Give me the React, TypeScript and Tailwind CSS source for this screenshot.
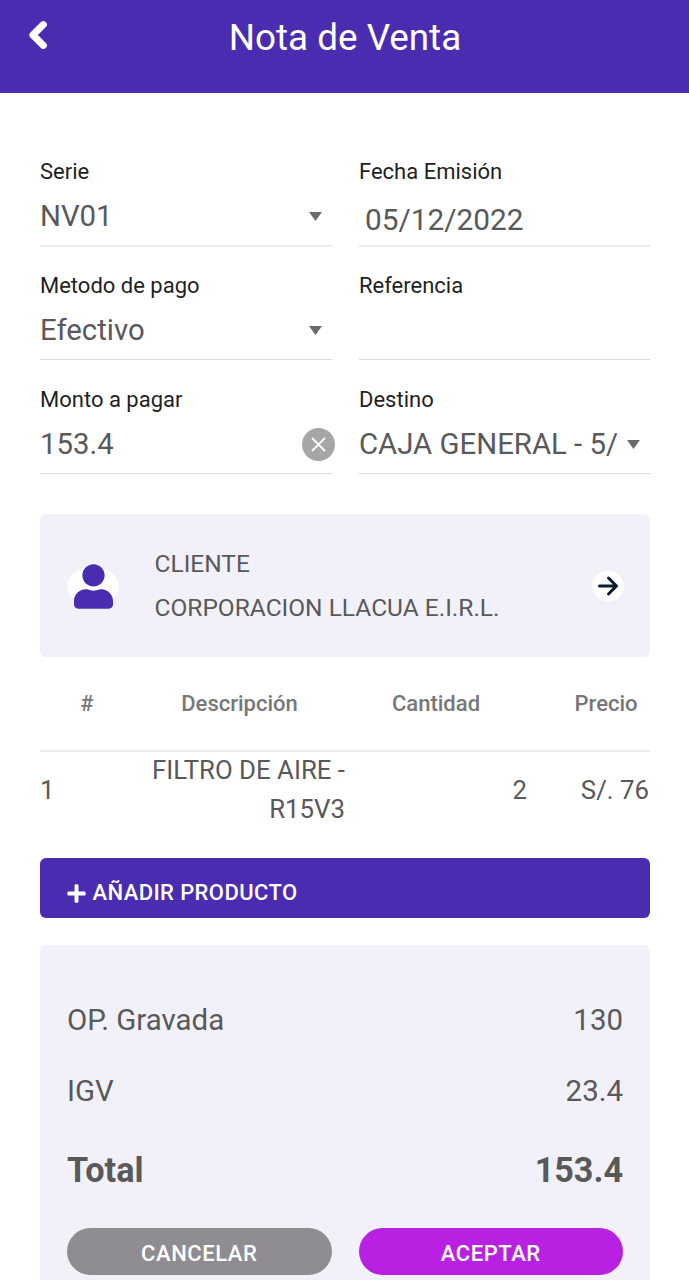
import type { ReactNode } from "react";
import { FaPlus, FaUser } from "react-icons/fa";

const font = { fontFamily: "Roboto, sans-serif" };

function Caret() {
  return (
    <svg className="h-[9px] w-[13px] shrink-0" viewBox="0 0 13 9">
      <path d="M0 0h13L6.5 9z" fill="#6b6b6b" />
    </svg>
  );
}

function Field({ label, first, children }: { label: string; first?: boolean; children?: ReactNode }) {
  return (
    <div className="flex h-[114px] flex-col">
      <div className="pt-[14px] text-[22px] leading-[26px] text-[#1f1f1f]">{label}</div>
      <div
        className={
          first
            ? "flex h-[62px] items-center border-b-2 border-[#ececec] pt-[2px] text-[29.35px] text-[#595959]"
            : "flex h-[61px] items-center border-b border-[#dcdcdc] pt-[2px] text-[29.35px] text-[#595959]"
        }
      >
        {children}
      </div>
    </div>
  );
}

export default function App() {
  return (
    <div style={font} className="h-[1280px] w-[689px] overflow-hidden bg-white text-[#595959]">
      <header className="flex h-[93px] items-center bg-[#4a2cb0] pb-[18px] text-white">
        <svg className="-mt-[5px] ml-[28px] h-[30px] w-[20px] shrink-0" viewBox="0 0 20 30" fill="none">
          <path d="M15.4 4.6L4.9 15l10.5 10.4" stroke="white" strokeWidth="7" strokeLinejoin="round" strokeLinecap="round" />
        </svg>
        <h1 className="mr-[47px] flex-1 text-center text-[36.8px]">Nota de Venta</h1>
      </header>
      <main className="pt-[52px] pr-[39px] pl-10">
        <div className="grid grid-cols-[292px_291px] gap-x-[27px]">
          <Field label="Serie" first>
            <span className="flex-1">NV01</span>
            <span className="pr-[10.5px]"><Caret /></span>
          </Field>
          <Field label="Fecha Emisión" first>
            <span className="pt-[8px] pl-[6px] text-[29.8px]">05/12/2022</span>
          </Field>
          <Field label="Metodo de pago">
            <span className="flex-1">Efectivo</span>
            <span className="pr-[10.5px]"><Caret /></span>
          </Field>
          <Field label="Referencia" />
          <Field label="Monto a pagar">
            <span className="flex-1">153.4</span>
            <svg className="mt-px -mr-[3px] size-[33px]" viewBox="0 0 33 33">
              <circle cx="16.5" cy="16.5" r="16.5" fill="#a6a6a6" />
              <path d="M10 10l13 13M23 10l-13 13" stroke="white" strokeWidth="1.8" />
            </svg>
          </Field>
          <Field label="Destino">
            <span className="w-[258px] overflow-hidden whitespace-nowrap">CAJA GENERAL - 5/</span>
            <span className="ml-[9.5px]"><Caret /></span>
          </Field>
        </div>
        <section className="mt-[27px] flex h-[143px] items-center rounded-[6px] bg-[#f2f1f9] px-[27px] text-[24.5px]">
          <div className="flex h-[38px] w-[52px] items-center justify-center rounded-[50%] bg-white pt-px">
            <FaUser className="mt-px h-[45px] w-[39px] shrink-0 text-[#4a2cb0]" />
          </div>
          <div className="ml-[35.5px] flex-1 pt-px leading-[44px]">
            <div>CLIENTE</div>
            <div>CORPORACION LLACUA E.I.R.L.</div>
          </div>
          <svg className="-mr-px size-[32px]" viewBox="0 0 32 32">
            <ellipse cx="16" cy="16" rx="16" ry="15.3" fill="white" />
            <path d="M7.5 16h17M16.5 8l8 8-8 8" fill="none" stroke="#0b1a30" strokeWidth="3" strokeLinecap="round" strokeLinejoin="round" />
          </svg>
        </section>
        <div className="flex h-[95px] items-center border-b-2 border-[#ececec] text-[22px] font-medium text-[#777]">
          <span className="w-[94px] text-center">#</span>
          <span className="w-[211px] text-center">Descripción</span>
          <span className="w-[182px] text-center">Cantidad</span>
          <span className="flex-1 pr-[12.5px] text-right">Precio</span>
        </div>
        <div className="flex h-[77px] items-center pb-px text-[25.8px]">
          <span className="w-[94px]">1</span>
          <span className="w-[211px] text-right leading-[39px]">FILTRO DE AIRE - R15V3</span>
          <span className="w-[182px] text-right">2</span>
          <span className="flex-1 pr-px text-right">S/. 76</span>
        </div>
        <button className="mt-[29px] flex h-[60px] w-full items-center rounded-[6px] bg-[#4a2cb0] pt-[8px] pl-[26px] text-[22px] font-medium tracking-[0.4px] text-white">
          <FaPlus className="mt-[2px] mr-[5.5px]" size={21} />
          AÑADIR PRODUCTO
        </button>
        <section className="mt-[27px] h-[360px] rounded-t-[6px] bg-[#f2f1f9] px-[27px] pt-[40px]">
          <div className="flex h-[71px] items-center justify-between text-[29.45px]"><span>OP. Gravada</span><span>130</span></div>
          <div className="flex h-[71px] items-center justify-between text-[29.45px]"><span>IGV</span><span>23.4</span></div>
          <div className="flex h-[88px] items-center justify-between text-[34.2px] font-bold"><span>Total</span><span>153.4</span></div>
          <div className="mt-[13px] grid grid-cols-2 gap-[27px] text-[22px] font-medium tracking-[0.55px] text-white">
            <button className="h-[47px] rounded-full bg-[#8f8d92] pt-[3px]">CANCELAR</button>
            <button className="h-[47px] rounded-full bg-[#b921e2] pt-[3px]">ACEPTAR</button>
          </div>
        </section>
      </main>
    </div>
  );
}
